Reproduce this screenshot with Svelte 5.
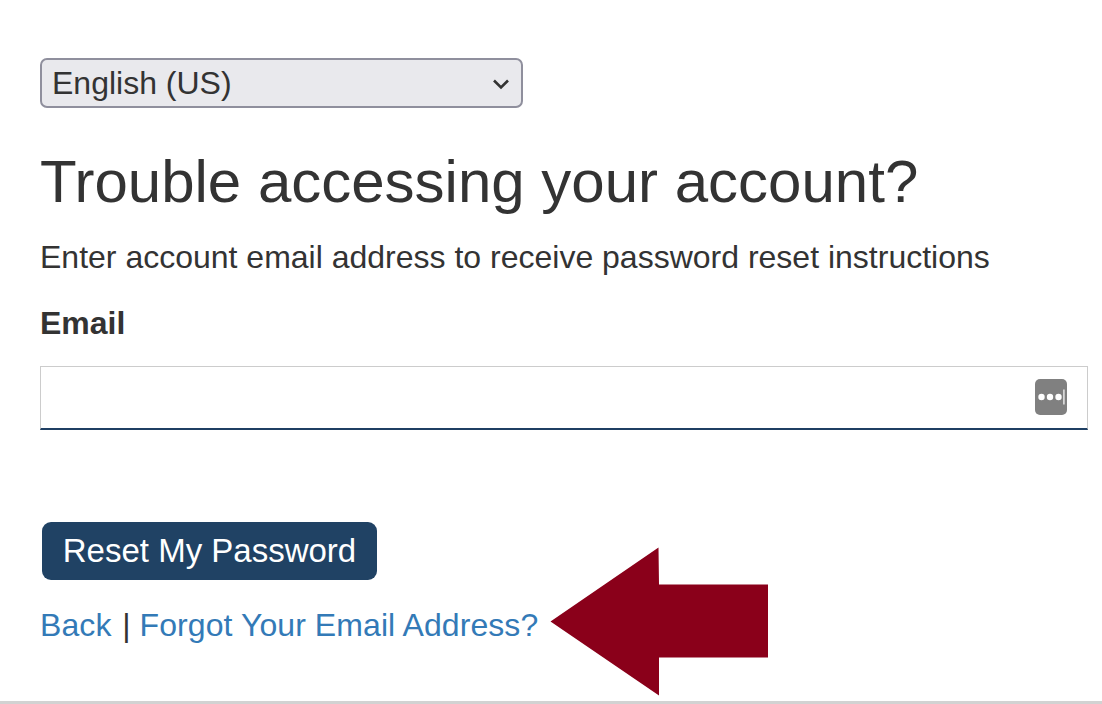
<script>
	let email = $state('');
	let language = $state('en-US');
</script>

<div class="page">
	<div class="lang-wrap">
		<select class="lang" bind:value={language}>
			<option value="en-US">English (US)</option>
		</select>
		<svg class="chevron" width="18" height="12" viewBox="0 0 18 12" aria-hidden="true">
			<path d="M2 2.5 L9 9.5 L16 2.5" fill="none" stroke="#333" stroke-width="2.6" />
		</svg>
	</div>

	<h1>Trouble accessing your account?</h1>
	<p class="intro">Enter account email address to receive password reset instructions</p>

	<label for="email">Email</label>
	<div class="field">
		<input id="email" type="text" bind:value={email} />
		<span class="keeper" aria-hidden="true">
			<svg width="32" height="36" viewBox="0 0 32 36">
				<circle cx="6.5" cy="18" r="3.2" fill="#fff" />
				<circle cx="15" cy="18" r="3.2" fill="#fff" />
				<circle cx="23.5" cy="18" r="3.2" fill="#fff" />
				<rect x="28.2" y="10.5" width="1.4" height="15" fill="#eee" />
			</svg>
		</span>
	</div>

	<button class="submit" type="button">Reset My Password</button>

	<div class="links">
		<a href="#back">Back</a> <span class="sep">|</span> <a href="#forgot">Forgot Your Email Address?</a>
		<svg class="arrow" width="220" height="150" viewBox="0 0 220 150" aria-hidden="true">
			<polygon points="0.5,74.5 108.5,0.5 109,37.5 218,37.5 218,110.5 109,110.5 109,148.5" fill="#8a001a" />
		</svg>
	</div>
</div>

<style>
	:global(body) {
		margin: 0;
		background: #fff;
	}

	.page {
		box-sizing: border-box;
		height: 704px;
		padding: 58px 14px 0 40px;
		border-bottom: 3px solid #d2d2d2;
		font-family: "Liberation Sans", Arial, sans-serif;
		color: #333;
		overflow: hidden;
	}

	.lang-wrap {
		position: relative;
		width: 483px;
		height: 50px;
	}

	.lang {
		appearance: none;
		box-sizing: border-box;
		width: 100%;
		height: 100%;
		padding: 0 40px 0 10px;
		background: #e9e9ed;
		border: 2px solid #8f8f9d;
		border-radius: 7px;
		font-family: inherit;
		font-size: 32px;
		color: #333;
	}

	.chevron {
		position: absolute;
		right: 13px;
		top: 20px;
		pointer-events: none;
	}

	h1 {
		margin: 36px 0 0;
		font-size: 60px;
		font-weight: 400;
		line-height: 75px;
		color: #333;
	}

	.intro {
		margin: 16px 0 0;
		font-size: 32px;
		line-height: 44px;
	}

	label {
		display: block;
		margin-top: 22px;
		font-size: 32px;
		font-weight: 700;
		line-height: 44px;
	}

	.field {
		position: relative;
		margin-top: 21px;
	}

	input {
		display: block;
		box-sizing: border-box;
		width: 100%;
		height: 64px;
		padding: 0 60px 0 12px;
		background: #fff;
		border: 1px solid #ccc;
		border-bottom: 2px solid #1f3f63;
		border-radius: 0;
		outline: none;
		font-family: inherit;
		font-size: 32px;
		color: #333;
	}

	.keeper {
		position: absolute;
		right: 21px;
		top: 13px;
		display: flex;
		width: 32px;
		height: 36px;
		background: #808080;
		border-radius: 5px;
	}

	.submit {
		display: block;
		width: 335px;
		margin: 92px 0 0 2px;
		height: 58px;
		padding: 0;
		background: #204264;
		border: none;
		border-radius: 9px;
		font-family: inherit;
		font-size: 33px;
		color: #fff;
	}

	.links {
		position: relative;
		margin-top: 23px;
		font-size: 32px;
		line-height: 44px;
	}

	.links a {
		color: #337ab7;
		text-decoration: none;
		letter-spacing: 0.08px;
	}

	.sep {
		margin-left: 2px;
	}

	.arrow {
		position: absolute;
		left: 510px;
		top: -56px;
	}
</style>
